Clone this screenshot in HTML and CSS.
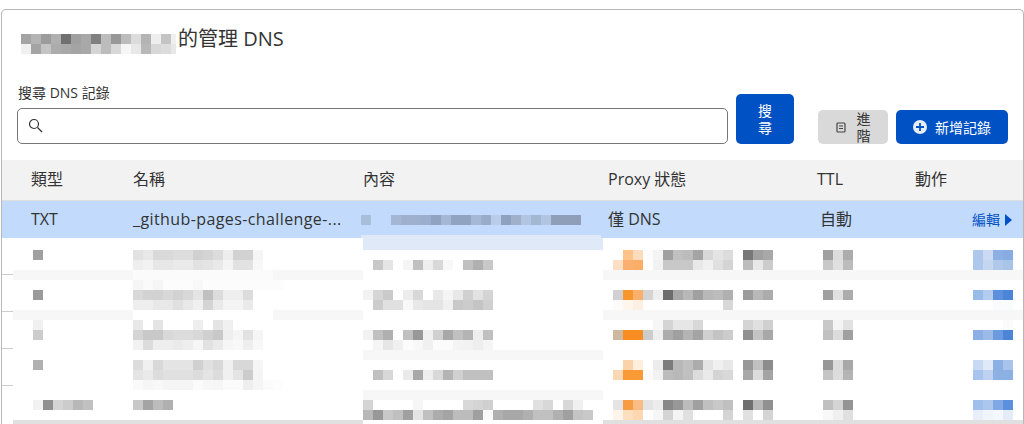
FILE: index.html
```html
<!doctype html>
<html lang="zh-Hant">
<head>
	<meta charset="UTF-8">
	<title>DNS</title>
	<link rel="stylesheet" href="styles.css">
</head>
<body>

	<div class="card">

		<!-- 標題 -->
		<div class="title">
			<svg class="mosaic title-mosaic" width="155" height="20" viewBox="0 0 15.5 2">
				<g>
					<rect x="0" fill="#a4a4a4"/><rect x="1" fill="#b4b4b4"/><rect x="2" fill="#9c9c9c"/><rect x="3" fill="#b0b0b0"/><rect x="4" fill="#707070"/><rect x="5" fill="#a0a0a0"/><rect x="6" fill="#a8a8a8"/><rect x="7" fill="#808080"/><rect x="8" fill="#bcbcbc"/><rect x="9" fill="#989898"/><rect x="10" fill="#bcbcbc"/><rect x="11" fill="#dcdcdc"/><rect x="12" fill="#b4b4b4"/><rect x="13" fill="#eeeeee"/><rect x="14" fill="#c4c4c4"/><rect x="15" fill="#f0f0f0"/>
				</g>
				<g transform="translate(0 1)">
					<rect x="0" fill="#f0f0f0"/><rect x="1" fill="#a4a4a4"/><rect x="2" fill="#c4c4c4"/><rect x="3" fill="#acacac"/><rect x="4" fill="#a8a8a8"/><rect x="5" fill="#a4a4a4"/><rect x="6" fill="#a8a8a8"/><rect x="7" fill="#d4d4d4"/><rect x="8" fill="#bcbcbc"/><rect x="9" fill="#d8d8d8"/><rect x="10" fill="#f6f6f6"/><rect x="11" fill="#e8e8e8"/><rect x="12" fill="#b8b8b8"/><rect x="13" fill="#d8d8d8"/><rect x="14" fill="#dcdcdc"/><rect x="15" fill="#e8e8e8"/>
				</g>
			</svg>
			<h1>的管理 DNS</h1>
		</div>

		<!-- 搜尋列 -->
		<div class="toolbar">
			<div class="search-field">
				<label for="searchInput">搜尋 DNS 記錄</label>
				<div class="search-box">
					<svg width="16" height="16" viewBox="0 0 16 16" fill="none" stroke="#333" stroke-width="1.2">
						<circle cx="6" cy="6" r="4.500"/>
						<path d="M9.500 9.500 14 14"/>
					</svg>
					<input type="text" id="searchInput">
				</div>
			</div>
			<button class="btn btn-primary btn-search"><span class="stack">搜尋</span></button>
			<button class="btn btn-grey">
				<svg width="10" height="11" viewBox="0 0 10 11" fill="none" stroke="#444" stroke-width="1.2">
					<rect x="1" y="1" width="8" height="9" rx="1"/>
					<path d="M3 4h4M3 6.500h4"/>
				</svg>
				<span class="stack">進階</span>
			</button>
			<button class="btn btn-primary btn-add">
				<svg width="14" height="14" viewBox="0 0 14 14">
					<circle cx="7" cy="7" r="7" fill="#e6eefa"/>
					<path d="M7 3v8M3 7h8" stroke="#0051c3" stroke-width="1.800"/>
				</svg>
				新增記錄
			</button>
		</div>

		<!-- 表格 -->
		<div class="row head-row">
			<div>類型</div>
			<div>名稱</div>
			<div>內容</div>
			<div>Proxy 狀態</div>
			<div>TTL</div>
			<div>動作</div>
		</div>

		<div class="row selected-row">
			<div>TXT</div>
			<div class="name">_github-pages-challenge-...</div>
			<svg class="mosaic content-mosaic" width="243" height="37" viewBox="0 -1.4 24.3 3.7">
				<rect x="0" fill="#a7bdd8"/><rect x="3" fill="#a5b6d4"/><rect x="4" fill="#9fb0cf"/><rect x="5" fill="#9fb0cf"/><rect x="6" fill="#9caecd"/><rect x="7" fill="#90a4c2"/><rect x="8" fill="#a5b9d6"/><rect x="9" fill="#90a4c2"/><rect x="10" fill="#90a4c2"/><rect x="11" fill="#a5b9d7"/><rect x="12" fill="#99adcb"/><rect x="13" fill="#b8cde9"/><rect x="14" fill="#8ea2bf"/><rect x="15" fill="#9fb0cb"/><rect x="16" fill="#b1c5e3"/><rect x="17" fill="#a2b7d0"/><rect x="18" fill="#b1c5e3"/><rect x="19" fill="#8f9fba"/><rect x="20" fill="#8f9fba"/><rect x="21" fill="#8f9fba"/>
				<path d="M0 2h24v.3h-24z" fill="#e0e9f8"/>
			</svg>
			<div>僅 DNS</div>
			<div class="ttl-auto">自動</div>
			<a class="edit" href="#">編輯<span class="caret"></span></a>
		</div>

		<!-- 其餘記錄已打馬賽克 -->
		<svg class="mosaic rows-mosaic" width="1021" height="186" viewBox="-0.1 -1.2 102.1 18.6">
			<path d="M36-1.200h24V0H36z" fill="#e0e9f8"/>
			<path d="M-.1 2.400H1v.1H-.1zM-.1 6.100H1v.1H-.1zM-.1 9.800H1v.1H-.1zM-.1 13.500H1v.1H-.1z" fill="#cccccc"/>
			<path d="M1 2h12v1H1zM27 2h9v1h-9zM60 2h42v1H60zM1 6h12v1H1zM27 6h9v1h-9zM60 6h42v1H60zM36 10h24v1H36zM36 14h24v1H36z" fill="#f7f7f7"/>
			<path d="M13 2h14v1H13z" fill="#fbfbfb"/>
			<path d="M1 17h35v1H1zM60 17h42v1H60z" fill="#e0e0e0"/>

			<g>
				<rect x="3" fill="#a0a0a0"/>
				<rect x="13" fill="#e2e2e2"/><rect x="14" fill="#e8e8e8"/><rect x="15" fill="#d9d9d9"/><rect x="16" fill="#d9d9d9"/><rect x="17" fill="#dddddd"/><rect x="18" fill="#dddddd"/><rect x="19" fill="#d0d0d0"/><rect x="20" fill="#d4d4d4"/><rect x="21" fill="#dcdcdc"/><rect x="22" fill="#ededed"/><rect x="23" fill="#d2d2d2"/><rect x="24" fill="#d2d2d2"/><rect x="25" fill="#f5f5f5"/>
				<rect x="62" fill="#fdc389"/><rect x="63" fill="#fcdcbc"/><rect x="64" fill="#fcfcfc"/><rect x="65" fill="#f4f4f4"/><rect x="66" fill="#a0a0a0"/><rect x="67" fill="#c0c0c0"/><rect x="68" fill="#bcbcbc"/><rect x="69" fill="#a4a4a4"/><rect x="70" fill="#d8d8d8"/><rect x="71" fill="#e4e4e4"/><rect x="72" fill="#dcdcdc"/><rect x="74" fill="#787878"/><rect x="75" fill="#a0a0a0"/><rect x="76" fill="#a8a8a8"/>
				<rect x="82" fill="#a0a0a0"/><rect x="83" fill="#dcdcdc"/><rect x="84" fill="#acacac"/>
				<rect x="97" fill="#aec8ec"/><rect x="98" fill="#cbdaf2"/><rect x="99" fill="#8cb0e4"/><rect x="100" fill="#88ace2"/>
			</g>
			<g transform="translate(0 1)">
				<rect x="13" fill="#eeeeee"/><rect x="14" fill="#f2f2f2"/><rect x="15" fill="#e7e7e7"/><rect x="16" fill="#e7e7e7"/><rect x="17" fill="#eaeaea"/><rect x="18" fill="#eaeaea"/><rect x="19" fill="#e2e2e2"/><rect x="20" fill="#e4e4e4"/><rect x="21" fill="#e9e9e9"/><rect x="22" fill="#f4f4f4"/><rect x="23" fill="#e2e2e2"/><rect x="24" fill="#e2e2e2"/><rect x="25" fill="#f8f8f8"/>
				<rect x="37" fill="#c8c8c8"/><rect x="38" fill="#e5e5e5"/><rect x="40" fill="#f5f5f5"/><rect x="41" fill="#c0c0c0"/><rect x="42" fill="#eeeeee"/><rect x="43" fill="#d8d8d8"/><rect x="44" fill="#f8f8f8"/><rect x="46" fill="#c0c0c0"/><rect x="47" fill="#b0b0b0"/><rect x="48" fill="#c8c8c8"/>
				<rect x="61" fill="#fcdfc4"/><rect x="62" fill="#fab070"/><rect x="63" fill="#fbae66"/><rect x="65" fill="#f2f2f2"/><rect x="66" fill="#c8c8c8"/><rect x="67" fill="#c8c8c8"/><rect x="68" fill="#c8c8c8"/><rect x="69" fill="#e8e8e8"/><rect x="70" fill="#f0f0f0"/><rect x="71" fill="#e0e0e0"/><rect x="72" fill="#d4d4d4"/><rect x="74" fill="#bcbcbc"/><rect x="75" fill="#e8e8e8"/><rect x="76" fill="#cccccc"/>
				<rect x="82" fill="#c8c8c8"/><rect x="83" fill="#e0e0e0"/><rect x="84" fill="#bcbcbc"/>
				<rect x="97" fill="#aec8ec"/><rect x="98" fill="#c5d7f0"/><rect x="99" fill="#b0c8ea"/><rect x="100" fill="#a8c4e8"/>
			</g>
			<g transform="translate(0 3)">
				<rect x="13" fill="#f5f5f5"/><rect x="14" fill="#fafafa"/><rect x="15" fill="#f5f5f5"/><rect x="16" fill="#fcfcfc"/><rect x="17" fill="#fcfcfc"/><rect x="18" fill="#fcfcfc"/><rect x="19" fill="#f8f8f8"/><rect x="20" fill="#fcfcfc"/><rect x="21" fill="#fcfcfc"/><rect x="22" fill="#fcfcfc"/><rect x="23" fill="#fcfcfc"/><rect x="24" fill="#fcfcfc"/><rect x="25" fill="#fcfcfc"/><rect x="26" fill="#fcfcfc"/><rect x="27" fill="#fcfcfc"/>
			</g>
			<g transform="translate(0 4)">
				<rect x="3" fill="#9a9a9a"/>
				<rect x="13" fill="#d8d8d8"/><rect x="14" fill="#d2d2d2"/><rect x="15" fill="#d2d2d2"/><rect x="16" fill="#d8d8d8"/><rect x="17" fill="#d2d2d2"/><rect x="18" fill="#d8d8d8"/><rect x="19" fill="#e4e4e4"/><rect x="20" fill="#c0c0c0"/><rect x="21" fill="#dcdcdc"/><rect x="22" fill="#eeeeee"/><rect x="23" fill="#eeeeee"/><rect x="24" fill="#dcdcdc"/>
				<rect x="36" fill="#f2f2f2"/><rect x="37" fill="#d6d6d6"/><rect x="38" fill="#cacaca"/><rect x="40" fill="#ececec"/><rect x="41" fill="#d8d8d8"/><rect x="43" fill="#e8e8e8"/><rect x="44" fill="#f5f5f5"/><rect x="45" fill="#e8e8e8"/><rect x="46" fill="#d0d0d0"/><rect x="47" fill="#e2e2e2"/><rect x="48" fill="#d4d4d4"/>
				<rect x="61" fill="#d0d0d0"/><rect x="62" fill="#f8962e"/><rect x="63" fill="#f9b06c"/><rect x="64" fill="#d4d4d4"/><rect x="65" fill="#eeeeee"/><rect x="66" fill="#6c6c6c"/><rect x="67" fill="#a8a8a8"/><rect x="68" fill="#b8b8b8"/><rect x="69" fill="#a0a0a0"/><rect x="70" fill="#b8b8b8"/><rect x="71" fill="#bcbcbc"/><rect x="72" fill="#b0b0b0"/><rect x="74" fill="#9c9c9c"/><rect x="75" fill="#b8b8b8"/><rect x="76" fill="#acacac"/>
				<rect x="82" fill="#a0a0a0"/><rect x="83" fill="#e0e0e0"/><rect x="84" fill="#acacac"/>
				<rect x="97" fill="#98bce8"/><rect x="98" fill="#b4ccee"/><rect x="99" fill="#5c90dc"/><rect x="100" fill="#4c84d8"/>
			</g>
			<g transform="translate(0 5)">
				<rect x="13" fill="#eeeeee"/><rect x="14" fill="#eeeeee"/><rect x="15" fill="#e8e8e8"/><rect x="16" fill="#e8e8e8"/><rect x="17" fill="#e0e0e0"/><rect x="18" fill="#e8e8e8"/><rect x="19" fill="#f0f0f0"/><rect x="20" fill="#d4d4d4"/><rect x="21" fill="#eaeaea"/><rect x="22" fill="#f4f4f4"/><rect x="23" fill="#f4f4f4"/><rect x="24" fill="#eaeaea"/>
				<rect x="37" fill="#cccccc"/><rect x="38" fill="#e0e0e0"/><rect x="39" fill="#e0e0e0"/><rect x="40" fill="#f8f8f8"/><rect x="41" fill="#e8e8e8"/><rect x="42" fill="#e4e4e4"/><rect x="43" fill="#e4e4e4"/><rect x="44" fill="#f0f0f0"/><rect x="45" fill="#c8c8c8"/><rect x="46" fill="#cccccc"/><rect x="47" fill="#c4c4c4"/><rect x="48" fill="#d0d0d0"/>
				<rect x="61" fill="#fdfbf9"/><rect x="62" fill="#fef5ec"/><rect x="63" fill="#fdf0e2"/><rect x="72" fill="#d8d8d8"/><rect x="99" fill="#fafbfd"/><rect x="100" fill="#fafbfd"/>
			</g>
			<g transform="translate(0 7)">
				<rect x="3" fill="#f0f0f0"/>
				<rect x="13" fill="#e8e8e8"/><rect x="15" fill="#e4e4e4"/><rect x="19" fill="#eeeeee"/><rect x="21" fill="#e4e4e4"/><rect x="22" fill="#f0f0f0"/>
				<rect x="65" fill="#f6f6f6"/><rect x="66" fill="#d4d4d4"/><rect x="67" fill="#e6e6e6"/><rect x="68" fill="#e6e6e6"/><rect x="69" fill="#d8d8d8"/><rect x="74" fill="#d4d4d4"/><rect x="75" fill="#e0e0e0"/><rect x="76" fill="#d0d0d0"/>
				<rect x="82" fill="#c8c8c8"/><rect x="83" fill="#f4f4f4"/><rect x="84" fill="#e2e2e2"/><rect x="100" fill="#fafbfd"/>
			</g>
			<g transform="translate(0 8)">
				<rect x="3" fill="#cccccc"/>
				<rect x="13" fill="#d4d4d4"/><rect x="14" fill="#c8c8c8"/><rect x="15" fill="#c8c8c8"/><rect x="16" fill="#d8d8d8"/><rect x="17" fill="#dcdcdc"/><rect x="18" fill="#dcdcdc"/><rect x="19" fill="#d8d8d8"/><rect x="20" fill="#d0d0d0"/><rect x="21" fill="#c8c8c8"/><rect x="22" fill="#eeeeee"/><rect x="23" fill="#f5f5f5"/><rect x="24" fill="#e2e2e2"/><rect x="25" fill="#f5f5f5"/>
				<rect x="36" fill="#f2f2f2"/><rect x="37" fill="#c0c0c0"/><rect x="38" fill="#b0b0b0"/><rect x="40" fill="#c0c0c0"/><rect x="41" fill="#989898"/><rect x="42" fill="#f0f0f0"/><rect x="43" fill="#d0d0d0"/><rect x="44" fill="#a8a8a8"/><rect x="45" fill="#c0c0c0"/><rect x="46" fill="#b4b4b4"/><rect x="47" fill="#eeeeee"/><rect x="48" fill="#c0c0c0"/>
				<rect x="61" fill="#cfb8a0"/><rect x="62" fill="#f88d22"/><rect x="63" fill="#f88d22"/><rect x="64" fill="#cccccc"/><rect x="65" fill="#eeeeee"/><rect x="66" fill="#acacac"/><rect x="67" fill="#a0a0a0"/><rect x="68" fill="#b4b4b4"/><rect x="69" fill="#a4a4a4"/><rect x="70" fill="#d0d0d0"/><rect x="71" fill="#c4c4c4"/><rect x="72" fill="#cccccc"/><rect x="74" fill="#909090"/><rect x="75" fill="#c4c4c4"/><rect x="76" fill="#a8a8a8"/>
				<rect x="82" fill="#c0c0c0"/><rect x="83" fill="#dcdcdc"/><rect x="84" fill="#a0a0a0"/>
				<rect x="97" fill="#8cb0e6"/><rect x="98" fill="#9cbae8"/><rect x="99" fill="#6c9ade"/><rect x="100" fill="#4c84d6"/>
			</g>
			<g transform="translate(0 9)">
				<rect x="13" fill="#f2f2f2"/><rect x="14" fill="#dcdcdc"/><rect x="15" fill="#eeeeee"/><rect x="16" fill="#eeeeee"/><rect x="17" fill="#eaeaea"/><rect x="18" fill="#eeeeee"/><rect x="19" fill="#f6f6f6"/><rect x="20" fill="#e2e2e2"/><rect x="21" fill="#eaeaea"/><rect x="22" fill="#f6f6f6"/><rect x="23" fill="#f8f8f8"/><rect x="24" fill="#eeeeee"/><rect x="25" fill="#f8f8f8"/>
				<rect x="37" fill="#f5f5f5"/><rect x="38" fill="#e6e6e6"/><rect x="39" fill="#f0f0f0"/><rect x="40" fill="#fcfcfc"/><rect x="41" fill="#f8f8f8"/><rect x="42" fill="#f0f0f0"/><rect x="43" fill="#fbfbfb"/><rect x="44" fill="#fbfbfb"/><rect x="45" fill="#f4f4f4"/><rect x="46" fill="#f2f2f2"/><rect x="47" fill="#eeeeee"/><rect x="48" fill="#f5f5f5"/>
			</g>
			<g transform="translate(0 11)">
				<rect x="3" fill="#b0b0b0"/>
				<rect x="13" fill="#dcdcdc"/><rect x="14" fill="#f0f0f0"/><rect x="15" fill="#d8d8d8"/><rect x="16" fill="#e4e4e4"/><rect x="17" fill="#e4e4e4"/><rect x="18" fill="#e4e4e4"/><rect x="19" fill="#d0d0d0"/><rect x="20" fill="#e0e0e0"/><rect x="21" fill="#d8d8d8"/><rect x="22" fill="#f0f0f0"/><rect x="23" fill="#d8d8d8"/><rect x="24" fill="#d8d8d8"/><rect x="25" fill="#f5f5f5"/>
				<rect x="62" fill="#fbd3ab"/><rect x="63" fill="#fdeedd"/><rect x="65" fill="#ececec"/><rect x="66" fill="#7c7c7c"/><rect x="67" fill="#b8b8b8"/><rect x="68" fill="#c0c0c0"/><rect x="69" fill="#acacac"/><rect x="70" fill="#e4e4e4"/><rect x="71" fill="#f0f0f0"/><rect x="72" fill="#e8e8e8"/><rect x="74" fill="#989898"/><rect x="75" fill="#c0c0c0"/><rect x="76" fill="#8c8c8c"/>
				<rect x="82" fill="#989898"/><rect x="83" fill="#dcdcdc"/><rect x="84" fill="#a8a8a8"/>
				<rect x="97" fill="#c8d9f3"/><rect x="98" fill="#e0e9f8"/><rect x="99" fill="#8cb0e4"/><rect x="100" fill="#a8c4ec"/>
			</g>
			<g transform="translate(0 12)">
				<rect x="13" fill="#e4e4e4"/><rect x="14" fill="#eaeaea"/><rect x="15" fill="#dcdcdc"/><rect x="16" fill="#e0e0e0"/><rect x="17" fill="#e0e0e0"/><rect x="18" fill="#e0e0e0"/><rect x="19" fill="#dcdcdc"/><rect x="20" fill="#e4e4e4"/><rect x="21" fill="#dcdcdc"/><rect x="22" fill="#f0f0f0"/><rect x="23" fill="#e4e4e4"/><rect x="24" fill="#cccccc"/><rect x="25" fill="#f4f4f4"/>
				<rect x="37" fill="#c0c0c0"/><rect x="38" fill="#d8d8d8"/><rect x="40" fill="#eaeaea"/><rect x="41" fill="#a8a8a8"/><rect x="42" fill="#eeeeee"/><rect x="43" fill="#d8d8d8"/><rect x="44" fill="#b4b4b4"/><rect x="45" fill="#d0d0d0"/><rect x="46" fill="#c0c0c0"/><rect x="47" fill="#c0c0c0"/><rect x="48" fill="#c0c0c0"/>
				<rect x="61" fill="#fcd7b4"/><rect x="62" fill="#f89a38"/><rect x="63" fill="#f99a34"/><rect x="64" fill="#fafafa"/><rect x="65" fill="#f2f2f2"/><rect x="66" fill="#bcbcbc"/><rect x="67" fill="#b8b8b8"/><rect x="68" fill="#c0c0c0"/><rect x="69" fill="#dcdcdc"/><rect x="70" fill="#eaeaea"/><rect x="71" fill="#d4d4d4"/><rect x="72" fill="#d8d8d8"/><rect x="74" fill="#a8a8a8"/><rect x="75" fill="#dcdcdc"/><rect x="76" fill="#a4a4a4"/>
				<rect x="82" fill="#c4c4c4"/><rect x="83" fill="#dcdcdc"/><rect x="84" fill="#b4b4b4"/>
				<rect x="97" fill="#a8c4ec"/><rect x="98" fill="#bcd2f0"/><rect x="99" fill="#8cb0e4"/><rect x="100" fill="#8cb0e4"/>
			</g>
			<g transform="translate(0 13)">
				<rect x="13" fill="#fafafa"/><rect x="14" fill="#f6f6f6"/><rect x="15" fill="#f8f8f8"/><rect x="16" fill="#f5f5f5"/><rect x="17" fill="#f5f5f5"/><rect x="18" fill="#f5f5f5"/><rect x="19" fill="#fbfbfb"/><rect x="20" fill="#f7f7f7"/><rect x="21" fill="#f6f6f6"/><rect x="22" fill="#fbfbfb"/><rect x="23" fill="#fbfbfb"/><rect x="24" fill="#eeeeee"/><rect x="25" fill="#f5f5f5"/><rect x="26" fill="#fbfbfb"/><rect x="27" fill="#fdfdfd"/>
			</g>
			<g transform="translate(0 15)">
				<rect x="3" fill="#f2f2f2"/><rect x="4" fill="#909090"/><rect x="5" fill="#d4d4d4"/><rect x="6" fill="#cccccc"/><rect x="7" fill="#b8b8b8"/><rect x="8" fill="#c0c0c0"/>
				<rect x="13" fill="#c8c8c8"/><rect x="14" fill="#a4a4a4"/><rect x="15" fill="#bcbcbc"/><rect x="16" fill="#b0b0b0"/>
				<rect x="36" fill="#d4d4d4"/><rect x="41" fill="#f6f6f6"/><rect x="46" fill="#d8d8d8"/><rect x="47" fill="#d4d4d4"/><rect x="48" fill="#d0d0d0"/><rect x="53" fill="#e0e0e0"/><rect x="54" fill="#d8d8d8"/><rect x="56" fill="#d8d8d8"/><rect x="57" fill="#f0f0f0"/>
				<rect x="61" fill="#e4e4e4"/><rect x="62" fill="#f89c44"/><rect x="63" fill="#f8bc84"/><rect x="64" fill="#e4e4e4"/><rect x="65" fill="#ececec"/><rect x="66" fill="#888888"/><rect x="67" fill="#989898"/><rect x="68" fill="#bcbcbc"/><rect x="69" fill="#a0a0a0"/><rect x="70" fill="#c0c0c0"/><rect x="71" fill="#c8c8c8"/><rect x="72" fill="#c0c0c0"/><rect x="74" fill="#707070"/><rect x="75" fill="#b8b8b8"/><rect x="76" fill="#909090"/>
				<rect x="82" fill="#c0c0c0"/><rect x="83" fill="#d4d4d4"/><rect x="84" fill="#949494"/>
				<rect x="97" fill="#a0c0ec"/><rect x="98" fill="#acc6ee"/><rect x="99" fill="#80a8e4"/><rect x="100" fill="#5c90dc"/>
			</g>
			<g transform="translate(0 16)">
				<rect x="36" fill="#b8b8b8"/><rect x="37" fill="#989898"/><rect x="38" fill="#c8c8c8"/><rect x="39" fill="#c0c0c0"/><rect x="40" fill="#a0a0a0"/><rect x="41" fill="#e4e4e4"/><rect x="42" fill="#c0c0c0"/><rect x="43" fill="#acacac"/><rect x="44" fill="#a4a4a4"/><rect x="45" fill="#bcbcbc"/><rect x="46" fill="#bcbcbc"/><rect x="47" fill="#a0a0a0"/><rect x="48" fill="#fafafa"/><rect x="49" fill="#b0b0b0"/><rect x="50" fill="#a8a8a8"/><rect x="51" fill="#a8a8a8"/><rect x="52" fill="#b0b0b0"/><rect x="53" fill="#c0c0c0"/><rect x="54" fill="#c0c0c0"/><rect x="55" fill="#b0b0b0"/><rect x="56" fill="#a0a0a0"/><rect x="57" fill="#c4c4c4"/><rect x="58" fill="#c8c8c8"/>
				<rect x="61" fill="#fef4ea"/><rect x="62" fill="#fcdfbf"/><rect x="63" fill="#fcd7b0"/><rect x="65" fill="#f6f6f6"/><rect x="66" fill="#d4d4d4"/><rect x="67" fill="#f4f4f4"/><rect x="68" fill="#e0e0e0"/><rect x="72" fill="#d4d4d4"/><rect x="74" fill="#e0e0e0"/><rect x="76" fill="#d4d4d4"/>
				<rect x="82" fill="#f8f8f8"/><rect x="83" fill="#f0f0f0"/><rect x="84" fill="#e0e0e0"/>
				<rect x="97" fill="#e8eff9"/><rect x="98" fill="#f0f5fb"/><rect x="99" fill="#f4f7fc"/><rect x="100" fill="#e4ecf8"/>
			</g>
		</svg>

	</div>

</body>
</html>
```

FILE: styles.css
```css
html,body {
	margin: 0px;
	padding: 0px;
	overflow: hidden;
	background: #fff;
}

body {
	height: 424px;
	padding: 9px 0px 0px 1px;
	box-sizing: border-box;
	font-family: "Open Sans", "Noto Sans CJK TC", sans-serif;
	color: #333;
}

.card {
	height: 415px;
	border: 1px solid #b8b8b8;
	border-bottom: none;
	border-radius: 5px 5px 0px 0px;
	box-sizing: border-box;
	overflow: hidden;
}

.mosaic {
	display: block;
	shape-rendering: crispEdges;
}

.mosaic rect {
	width: 1px;
	height: 1px;
}

/*標題*/
.title {
	display: flex;
	gap: 2px;
	height: 29px;
	padding: 15px 0px 0px 19px;
	box-sizing: content-box;
}

.title-mosaic {
	align-self: flex-end;
}

.title h1 {
	margin: 0px;
	font-size: 20px;
	font-weight: 400;
	line-height: 28px;
}

/*搜尋列*/
.toolbar {
	display: flex;
	align-items: flex-end;
	margin-top: 30px;
	padding: 0px 15px;
}

.search-field {
	flex: 1;
}

.search-field label {
	display: block;
	height: 18px;
	margin-bottom: 6px;
	padding-left: 1px;
	font-size: 14px;
	line-height: 18px;
}

.search-box {
	display: flex;
	align-items: center;
	gap: 5px;
	height: 36px;
	padding-left: 10px;
	border: 1px solid #777;
	border-radius: 5px;
	box-sizing: border-box;
}

.search-box input {
	flex: 1;
	min-width: 0;
	border: none;
	outline: none;
	background: none;
}

.btn {
	display: flex;
	align-items: center;
	justify-content: center;
	padding: 0px;
	border: none;
	border-radius: 5px;
	font-family: inherit;
	font-size: 14px;
	line-height: 17px;
	cursor: pointer;
}

.btn-primary {
	background: #0051c3;
	color: #fff;
}

.btn-search {
	width: 58px;
	height: 50px;
	margin-left: 8px;
}

.btn-grey {
	gap: 11px;
	width: 70px;
	height: 34px;
	margin-left: 24px;
	background: #d9d9d9;
	color: #333;
}

.btn-add {
	gap: 8px;
	width: 112px;
	height: 34px;
	margin-left: 8px;
}

.stack {
	display: block;
	width: 1em;
}

/*表格*/
.row {
	display: grid;
	grid-template-columns: 102px 230px 245px 209px 98px 1fr;
	align-items: center;
	padding-left: 29px;
	font-size: 16px;
	line-height: 22px;
}

.row > div {
	padding-bottom: 2px;
}

.head-row {
	height: 41px;
	margin-top: 16px;
	border-bottom: 1px solid #ddd;
	box-sizing: border-box;
	background: #f2f2f2;
}

.selected-row {
	height: 37px;
	background: #c2dbfc;
}

.name {
	letter-spacing: 0.4px;
}

.ttl-auto {
	padding-left: 3px;
}

.content-mosaic {
	margin-left: -2px;
}

.edit {
	display: flex;
	align-items: center;
	justify-content: flex-end;
	gap: 5px;
	padding-right: 11px;
	font-size: 14px;
	color: #0051c3;
	text-decoration: none;
}

.caret {
	width: 0;
	height: 0;
	border-left: 7px solid #0051c3;
	border-top: 6px solid transparent;
	border-bottom: 6px solid transparent;
}
```
